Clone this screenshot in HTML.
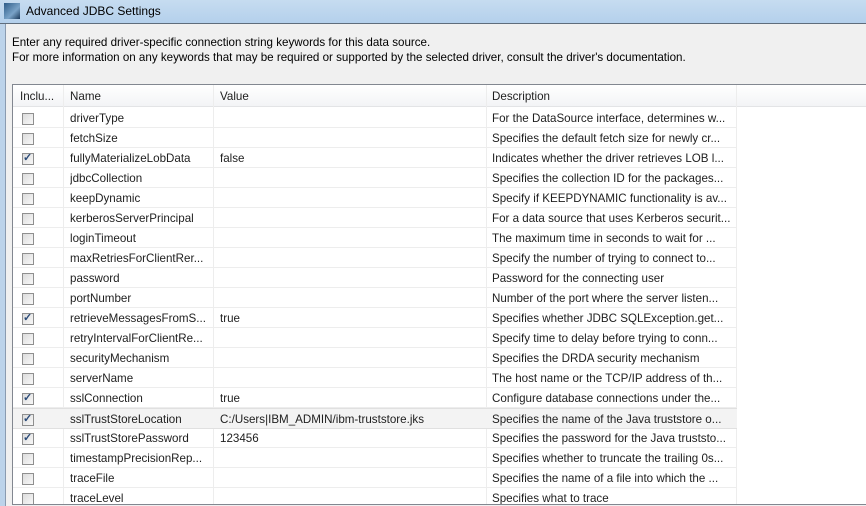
<!DOCTYPE html><html><head><style>
body{margin:0;width:866px;height:506px;overflow:hidden;font-family:"Liberation Sans",sans-serif;font-size:11.6px;color:#1e1e1e;background:#f0f0f0;position:relative}
.title{position:absolute;left:0;top:0;width:866px;height:23px;background:linear-gradient(#c6dcf0,#b4d0ec);border-bottom:1px solid #5f6d7c}
.title span{position:absolute;left:26px;top:4px;font-size:12px;color:#000}
.ic{position:absolute;left:4px;top:3px;width:16px;height:16px;background:linear-gradient(135deg,#2d5c88,#7aa3c8 60%,#1b3a5c)}
.frame{position:absolute;left:0;top:24px;width:5px;height:482px;background:#bcd3ea;border-right:1px solid #8a9bb0}
.txt{position:absolute;left:12px;top:35px;line-height:15px;color:#000}
.tbl{position:absolute;left:12px;top:84px;width:860px;height:419px;background:#fff;border:1px solid #828790;overflow:hidden}
.row{position:absolute;left:0;width:724px;height:19px;border-bottom:1px solid #ededed}
.row div{position:absolute;top:4px;white-space:nowrap;overflow:hidden}
.hdr{position:absolute;left:0;top:0;width:860px;height:21px;background:linear-gradient(#fff,#f3f4f6);border-bottom:1px solid #e3e4e6}
.hdr div{position:absolute;top:5px}
.vl{position:absolute;top:0;width:1px;height:420px;background:#ededed}
.cb{position:absolute;left:9px;top:5px;width:10px;height:10px;border:1px solid #8f8f8f;background:linear-gradient(135deg,#dcdcdc,#f8f8f8)}
.cb.c::after{content:"✓";position:absolute;left:0;top:-3px;font-size:11px;color:#2a4a78;font-weight:bold}
</style></head><body>
<div class="title"><div class="ic"></div><span>Advanced JDBC Settings</span></div>
<div class="frame"></div>
<div class="txt">Enter any required driver-specific connection string keywords for this data source.<br>For more information on any keywords that may be required or supported by the selected driver, consult the driver's documentation.</div>
<div class="tbl">
<div class="hdr"><div style="left:7px">Inclu...</div><div style="left:57px">Name</div><div style="left:207px">Value</div><div style="left:479px">Description</div></div>
<div class="vl" style="left:50px"></div><div class="vl" style="left:200px"></div><div class="vl" style="left:473px"></div><div class="vl" style="left:723px"></div>
<div id="rows"></div>
</div>
<script>
var d=[["driverType","","For the DataSource interface, determines w...",0],["fetchSize","","Specifies the default fetch size for newly cr...",0],["fullyMaterializeLobData","false","Indicates whether the driver retrieves LOB l...",1],["jdbcCollection","","Specifies the collection ID for the packages...",0],["keepDynamic","","Specify if KEEPDYNAMIC functionality is av...",0],["kerberosServerPrincipal","","For a data source that uses Kerberos securit...",0],["loginTimeout","","The maximum time in seconds to wait for ...",0],["maxRetriesForClientRer...","","Specify the number of trying to connect to...",0],["password","","Password for the connecting user",0],["portNumber","","Number of the port where the server listen...",0],["retrieveMessagesFromS...","true","Specifies whether JDBC SQLException.get...",1],["retryIntervalForClientRe...","","Specify time to delay before trying to conn...",0],["securityMechanism","","Specifies the DRDA security mechanism",0],["serverName","","The host name or the TCP/IP address of th...",0],["sslConnection","true","Configure database connections under the...",1],["sslTrustStoreLocation","C:/Users|IBM_ADMIN/ibm-truststore.jks","Specifies the name of the Java truststore o...",1],["sslTrustStorePassword","123456","Specifies the password for the Java truststo...",1],["timestampPrecisionRep...","","Specifies whether to truncate the trailing 0s...",0],["traceFile","","Specifies the name of a file into which the ...",0],["traceLevel","","Specifies what to trace",0]];
var h="";d.forEach(function(r,i){h+='<div class="row" style="top:'+(23+20*i)+'px;'+(i==15?'background:#f3f3f3;border-top:1px solid #e0e0e0;border-bottom-color:#e0e0e0;':'')+'"><span class="cb'+(r[3]?' c':'')+'"></span><div style="left:57px;width:142px">'+r[0]+'</div><div style="left:207px;width:265px">'+r[1]+'</div><div style="left:479px;width:243px">'+r[2]+'</div></div>';});
document.getElementById("rows").innerHTML=h;
</script>
</body></html>
